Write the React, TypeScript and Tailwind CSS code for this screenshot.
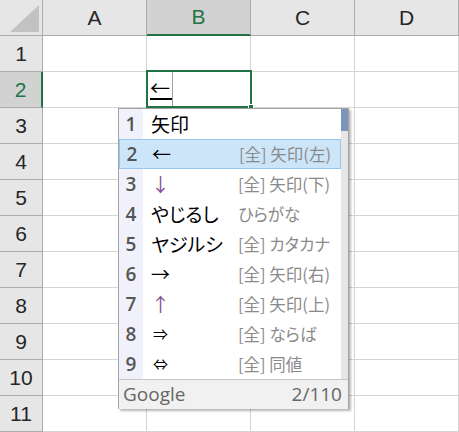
import React from "react";

const cols = ["A", "B", "C", "D"];
const rows = [1, 2, 3, 4, 5, 6, 7, 8, 9, 10, 11];

type Cand = { n: string; text: string; note: string; purple?: boolean; small?: boolean };
const cands: Cand[] = [
  { n: "1", text: "矢印", note: "" },
  { n: "2", text: "←", note: "[全] 矢印(左)" },
  { n: "3", text: "↓", note: "[全] 矢印(下)", purple: true },
  { n: "4", text: "やじるし", note: "ひらがな" },
  { n: "5", text: "ヤジルシ", note: "[全] カタカナ" },
  { n: "6", text: "→", note: "[全] 矢印(右)" },
  { n: "7", text: "↑", note: "[全] 矢印(上)", purple: true },
  { n: "8", text: "⇒", note: "[全] ならば", small: true },
  { n: "9", text: "⇔", note: "[全] 同値", small: true },
];

const jp = "font-['Noto_Sans_CJK_JP',sans-serif] [font-feature-settings:'palt']";

export default function App() {
  return (
    <div className="relative w-[459px] h-[432px] overflow-hidden bg-white font-['Liberation_Sans',sans-serif]">
      {/* header row */}
      <div className="flex h-[36px]">
        <div className="relative w-[43px] h-full border-r border-b border-[#ababab] bg-[#e6e6e6]">
          <svg className="absolute left-0 top-0" width="43" height="36">
            <polygon points="10,32 39,32 39,5" fill="#c2c2c2" />
          </svg>
        </div>
        {cols.map((c) =>
          c === "B" ? (
            <div
              key={c}
              className="w-[104px] h-full flex items-center justify-center text-[21px] bg-[#d2d2d2] text-[#217346] border-r border-r-[#ababab] border-b-2 border-b-[#217346]"
            >
              {c}
            </div>
          ) : (
            <div
              key={c}
              className="w-[104px] h-full flex items-center justify-center text-[21px] bg-[#e6e6e6] text-[#262626] border-r border-b border-[#ababab]"
            >
              {c}
            </div>
          )
        )}
      </div>
      {rows.map((r) => (
        <div key={r} className="flex h-[36px]">
          {r === 2 ? (
            <div className="w-[43px] h-full flex items-center justify-center text-[21px] bg-[#d2d2d2] text-[#217346] border-b border-b-[#ababab] border-r-2 border-r-[#217346]">
              {r}
            </div>
          ) : (
            <div className="w-[43px] h-full flex items-center justify-center text-[21px] bg-[#e6e6e6] text-[#262626] border-b border-r border-[#ababab]">
              {r}
            </div>
          )}
          {cols.map((c) => (
            <div key={c} className="relative w-[104px] h-full border-r border-b border-[#d4d4d4]">
              {r === 2 && c === "B" && (
                <div className="absolute left-[3px] top-0 w-[23px] h-full border-r border-[#a0a0a0]">
                  <div className={`absolute left-0 top-[6px] text-[20px] leading-[20px] text-black ${jp}`}>←</div>
                  <div className="absolute left-0 top-[26px] w-[22px] h-[2px] bg-black" />
                </div>
              )}
            </div>
          ))}
        </div>
      ))}

      {/* active cell */}
      <div className="absolute left-[146px] top-[70px] w-[106px] h-[38px] border-2 border-[#217346]" />
      <div className="absolute left-[248px] top-[104px] w-[6px] h-[6px] bg-[#217346] border border-white" />

      {/* IME candidate popup */}
      <div className="absolute left-[118px] top-[108px] w-[231px] h-[301px] border border-[#a3a3a3] bg-white flex flex-col shadow-[2px_2px_2px_rgba(0,0,0,0.28)]">
        <div className="flex h-[270px]">
          <div className="flex-1 flex flex-col">
            {cands.map((c) => {
              const sel = c.n === "2";
              return (
                <div
                  key={c.n}
                  className={
                    sel
                      ? "flex h-[30px] items-center bg-[#cde5f9] border border-[#98c6ee]"
                      : "flex h-[30px] items-center"
                  }
                >
                  <div
                    className={
                      sel
                        ? "w-[24px] h-full flex items-center justify-center font-['Open_Sans',sans-serif] font-semibold text-[19px] text-[#555]"
                        : "w-[24px] h-full flex items-center justify-center bg-[#f1f1fb] font-['Open_Sans',sans-serif] font-semibold text-[19px] text-[#555]"
                    }
                  >
                    {c.n}
                  </div>
                  <div
                    className={
                      c.purple
                        ? `w-[95px] pl-[8px] text-[19px] leading-[24px] text-[#8a4f96] ${jp}`
                        : c.small
                        ? `w-[95px] pl-[10px] text-[15px] leading-[24px] text-black ${jp}`
                        : `w-[95px] pl-[8px] text-[19px] leading-[24px] text-black ${jp}`
                    }
                  >
                    {c.text}
                  </div>
                  <div className={`text-[16.5px] leading-[24px] text-[#8a8a8a] whitespace-nowrap ${jp}`}>{c.note}</div>
                </div>
              );
            })}
          </div>
          <div className="w-[7px] h-full bg-[#e6e6e6]">
            <div className="w-full h-[22px] bg-[#7d95bb]" />
          </div>
        </div>
        <div className="flex-1 flex items-center justify-between pl-[4px] pr-[6px] border-t border-[#c6c6c6] bg-[#f1f1f1] font-['Open_Sans',sans-serif] text-[19px] text-[#666]">
          <span>Google</span>
          <span>2/110</span>
        </div>
      </div>
    </div>
  );
}
